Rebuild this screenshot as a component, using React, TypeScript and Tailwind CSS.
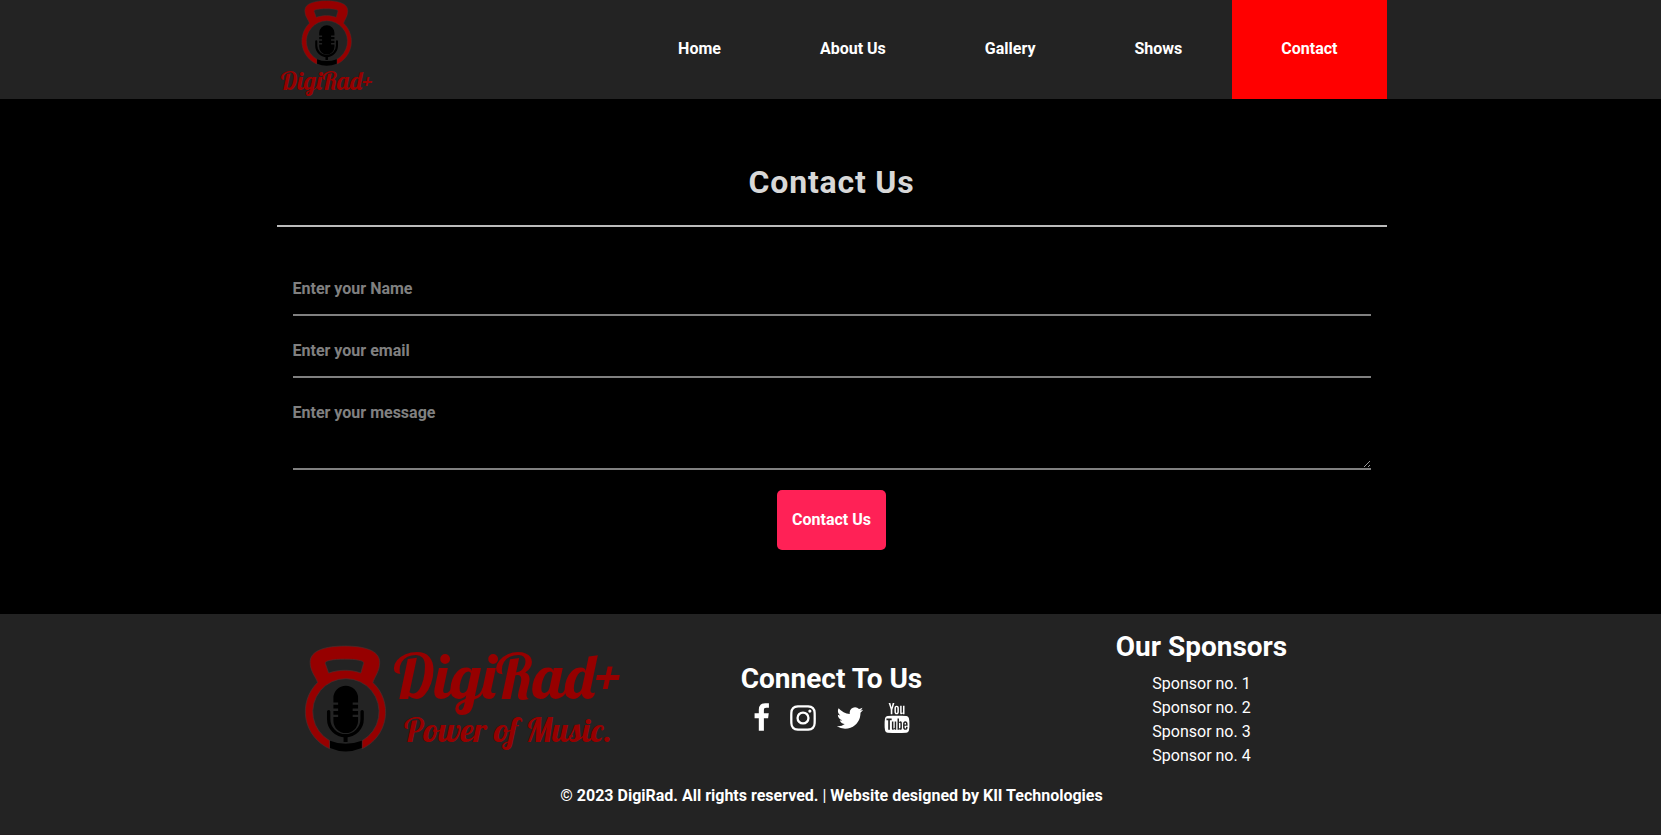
import React from "react";
import { TfiYoutube } from "react-icons/tfi";

const LOGO_FONT = "'Lobster', 'Liberation Serif', serif";

/* Kettlebell with a microphone inside; drawn in a 246 x 317 box. */
function Emblem() {
  return (
    <g transform="translate(-46 -43)">
      <path
        fillRule="evenodd"
        fill="#960000"
        stroke="#4a3030"
        strokeWidth="2"
        d="M86 154C82 138 64 122 64 94C64 58 112 46 167 46C222 46 270 58 270 94C270 122 254 138 250 154A120 120 0 0 1 218 350L218 326A98 98 0 1 0 122 326L122 350A120 120 0 0 1 86 154ZM109 97C107 90 128 85 167 85C206 85 226 90 222 98L214 126C186 115 150 115 119 126Z"
      />
      <path d="M133 200a36.500 36.500 0 0 1 73 0V213H190V220H206V231H190V238H206V249H190V256H206V267a36.500 36.500 0 0 1-73 0V256H147V249H133V238H147V231H133V220H147V213H133Z" fill="#000" />
      <path d="M119 240V262a49.500 49.500 0 0 0 99 0V240" fill="none" stroke="#000" strokeWidth="10" strokeLinecap="round" />
      <path d="M163 310h12v20h-12z" fill="#000" />
      <path d="M123 326Q145 335 169 335T217 326V348Q193 358 169 358T123 348Z" fill="#000" />
    </g>
  );
}

function StackedLogo() {
  return (
    <svg viewBox="0 0 99 99" className="size-[99px]" role="img" aria-label="DigiRad+">
      <g transform="translate(24 0) scale(.209)">
        <Emblem />
      </g>
      <text x="50" y="90" textAnchor="middle" fill="#960000" fontFamily={LOGO_FONT} fontSize="25">
        DigiRad+
      </text>
    </svg>
  );
}

function WideLogo() {
  return (
    <svg viewBox="0 0 316 108" className="w-[316px] max-w-full overflow-visible" role="img" aria-label="DigiRad+ Power of Music.">
      <g transform="scale(.338)">
        <Emblem />
      </g>
      <g fill="#960000" fontFamily={LOGO_FONT} textAnchor="middle">
        <text x="204" y="54" fontSize="62">DigiRad+</text>
        <text x="204" y="97" fontSize="34">Power of Music.</text>
      </g>
    </svg>
  );
}

const NAV = ["Home", "About Us", "Gallery", "Shows", "Contact"];
const SPONSORS = ["Sponsor no. 1", "Sponsor no. 2", "Sponsor no. 3", "Sponsor no. 4"];

const FACEBOOK =
  "M1343 12v264h-157q-86 0-116 36t-30 108v189h293l-39 296h-254v759h-306v-759h-255v-296h255v-218q0-186 104-288.5t277-102.5q147 0 228 12z";
const INSTAGRAM =
  "M1152 896q0-106-75-181t-181-75-181 75-75 181 75 181 181 75 181-75 75-181zm138 0q0 164-115 279t-279 115-279-115-115-279 115-279 279-115 279 115 115 279zm108-410q0 38-27 65t-65 27-65-27-27-65 27-65 65-27 65 27 27 65zm-502-220q-7 0-76.5-.5t-105.5 0-96.5 3-103 10-71.5 18.5q-50 20-88 58t-58 88q-11 29-18.5 71.5t-10 103-3 96.5 0 105.5.5 76.5-.5 76.5 0 105.5 3 96.5 10 103 18.5 71.5q20 50 58 88t88 58q29 11 71.5 18.5t103 10 96.5 3 105.5 0 76.5-.5 76.5.5 105.5 0 96.5-3 103-10 71.5-18.5q50-20 88-58t58-88q11-29 18.5-71.5t10-103 3-96.5 0-105.5-.5-76.5.5-76.5 0-105.5-3-96.5-10-103-18.5-71.5q-20-50-58-88t-88-58q-29-11-71.5-18.5t-103-10-96.5-3-105.5 0-76.5.5zm768 630q0 229-5 317-10 208-124 322t-322 124q-88 5-317 5t-317-5q-208-10-322-124t-124-322q-5-88-5-317t5-317q10-208 124-322t322-124q88-5 317-5t317 5q208 10 322 124t124 322q5 88 5 317z";
const TWITTER =
  "M1684 408q-67 98-162 167 1 14 1 42 0 130-38 259.5t-115.5 248.5-184.5 210.5-258 146-323 54.500q-271 0-496-145 35 4 78 4 225 0 401-138-105-2-188-64.500t-114-159.500q33 5 61 5 43 0 85-11-112-23-185.500-111.500t-73.500-205.500v-4q68 38 146 41-66-44-105-115t-39-154q0-88 44-163 121 149 294.500 238.500t371.500 99.500q-8-38-8-74 0-134 94.500-228.500t228.500-94.500q140 0 236 102 109-21 205-78-37 115-142 178 93-10 186-50z";

export default function App() {
  return (
    <div className="min-h-screen bg-[#231f20] font-['Roboto',sans-serif] text-base text-white">
      <header className="bg-[#232323] pl-0.5">
        <div className="mx-auto flex max-w-[1110px] items-stretch justify-between">
          <a href="#home">
            <StackedLogo />
          </a>
          <nav className="flex items-stretch gap-px">
            {NAV.map((label) => (
              <a
                key={label}
                href={"#" + label.toLowerCase().replace(" ", "-")}
                className={
                  label === "Contact"
                    ? "flex items-center bg-[#ff0000] px-[49px] pb-[2px] font-bold"
                    : "flex items-center px-[49px] pb-[2px] font-bold"
                }
              >
                {label}
              </a>
            ))}
          </nav>
        </div>
      </header>

      <main className="bg-black pt-16 pb-16 pl-0.5">
        <div className="mx-auto max-w-[1110px]">
          <h1 className="border-b-2 border-[#bbbbbb] pb-6 text-center text-[32px] leading-[38px] font-bold tracking-wide text-[#d8d8d8]">
            Contact Us
          </h1>
          <form className="flex flex-col gap-2 px-4 pt-[35px]" onSubmit={(e) => e.preventDefault()}>
            <input
              type="text"
              aria-label="Name"
              placeholder="Enter your Name"
              className="h-[54px] w-full border-b-2 border-[#808080] bg-transparent font-bold outline-none placeholder:text-[#808080]"
            />
            <input
              type="email"
              aria-label="Email"
              placeholder="Enter your email"
              className="h-[54px] w-full border-b-2 border-[#808080] bg-transparent font-bold outline-none placeholder:text-[#808080]"
            />
            <textarea
              aria-label="Message"
              placeholder="Enter your message"
              className="h-[84px] w-full resize border-b-2 border-[#808080] bg-transparent pt-[15px] font-bold outline-none placeholder:text-[#808080]"
            />
            <button type="submit" className="mt-3 h-[60px] self-center rounded-[5px] bg-[#ff2156] px-[15px] font-bold text-white">
              Contact Us
            </button>
          </form>
        </div>
      </main>

      <footer className="bg-[#232323] pt-4 pb-[26px] pl-0.5">
        <div className="mx-auto grid max-w-[1110px] grid-cols-3 items-center justify-items-center">
          <a href="#home">
            <WideLogo />
          </a>
          <section className="flex flex-col items-center gap-[7px] pb-[3px]">
            <h2 className="text-[28px] leading-[34px] font-bold">Connect To Us</h2>
            <div className="flex gap-5">
              <a href="#facebook" aria-label="Facebook">
                <svg viewBox="384 0 1024 1792" className="h-[30px] w-[17px]" fill="currentColor"><path d={FACEBOOK} /></svg>
              </a>
              <a href="#instagram" aria-label="Instagram">
                <svg viewBox="128 0 1536 1792" className="h-[30px] w-[26px]" fill="currentColor"><path d={INSTAGRAM} /></svg>
              </a>
              <a href="#twitter" aria-label="Twitter">
                <svg viewBox="64 0 1664 1792" className="h-[30px] w-[28px]" fill="currentColor"><path d={TWITTER} /></svg>
              </a>
              <a href="#youtube" aria-label="YouTube" className="-mx-0.5">
                <TfiYoutube className="size-[30px]" />
              </a>
            </div>
          </section>
          <section className="flex flex-col items-center gap-2">
            <h2 className="text-[28px] leading-[34px] font-bold">Our Sponsors</h2>
            <ul>
              {SPONSORS.map((name) => (
                <li key={name}>{name}</li>
              ))}
            </ul>
          </section>
        </div>
        <p className="mt-4 text-center">
          <strong>© 2023 DigiRad. All rights reserved.</strong> | <strong>Website designed by KII Technologies</strong>
        </p>
      </footer>
    </div>
  );
}
